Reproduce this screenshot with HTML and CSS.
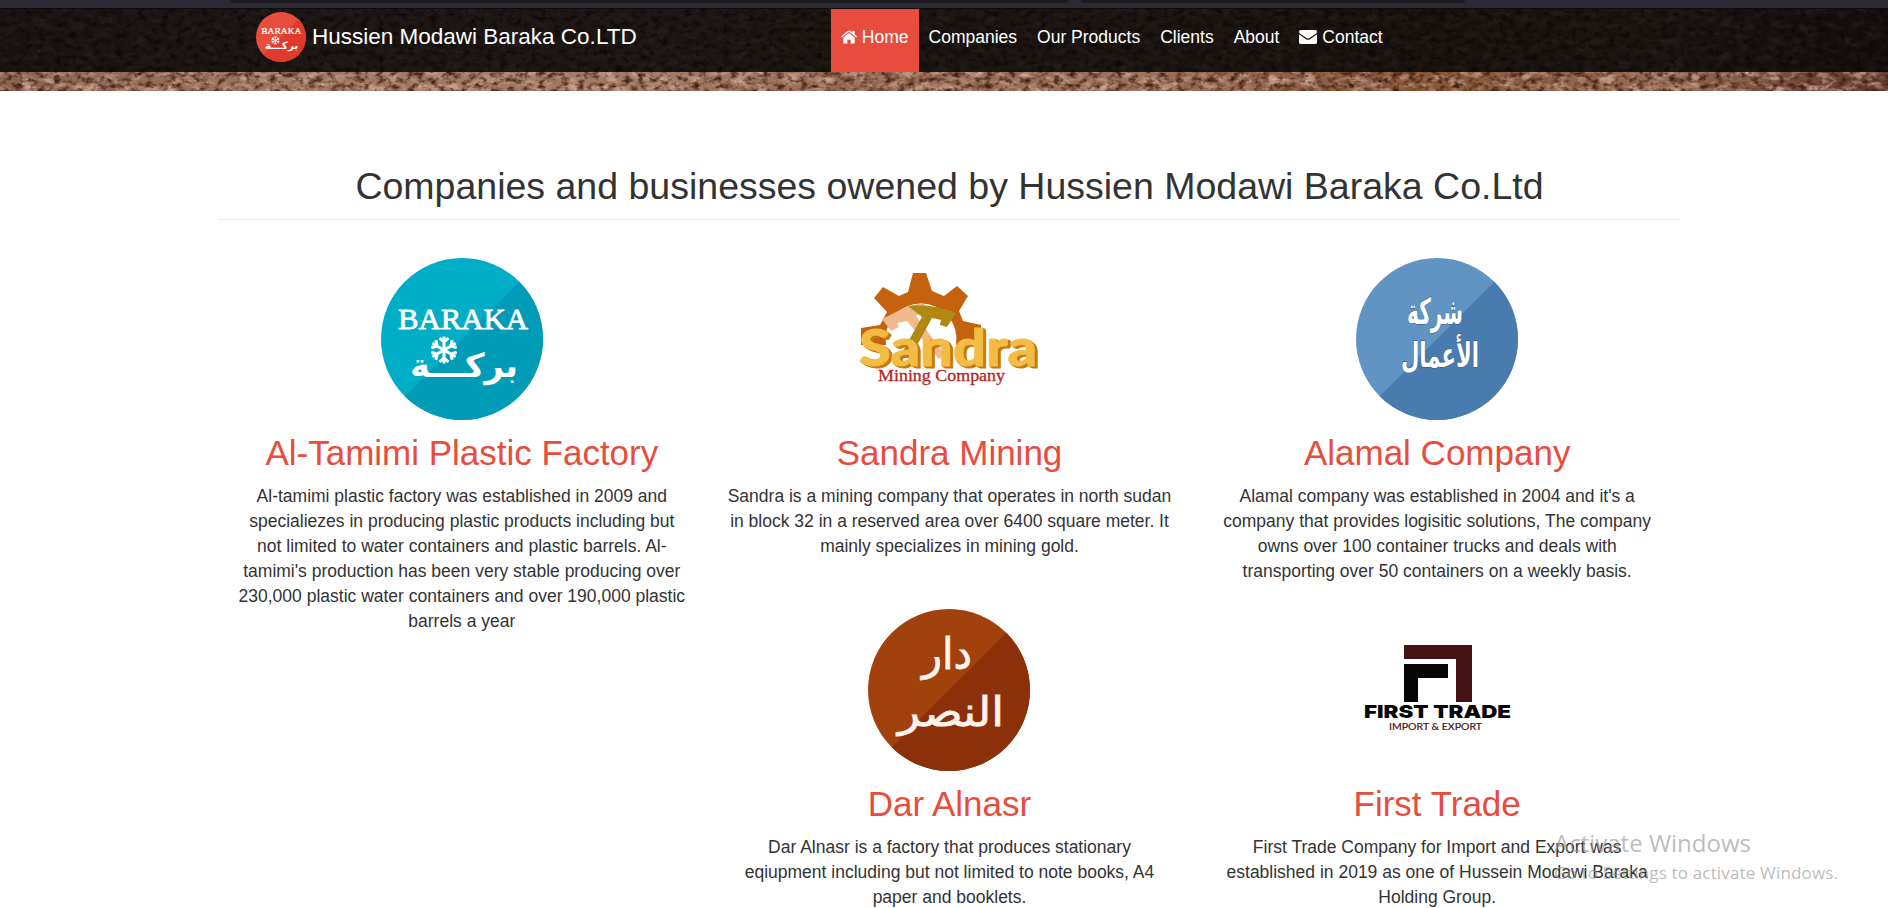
FILE: index.html
```html
<!DOCTYPE html>
<html lang="en">
<head>
<meta charset="utf-8">
<title>Hussien Modawi Baraka Co.LTD</title>
<link rel="stylesheet" href="styles.css">
</head>
<body>
<header class="hero">
  <svg class="rock" width="1888" height="91" aria-hidden="true">
    <defs>
      <linearGradient id="rockBase" x1="0" x2="1">
        <stop offset="0" stop-color="#8c6250"/><stop offset=".15" stop-color="#a07663"/>
        <stop offset=".35" stop-color="#a47b68"/><stop offset=".45" stop-color="#986a54"/>
        <stop offset=".6" stop-color="#9c705b"/><stop offset=".75" stop-color="#8a5536"/>
        <stop offset=".88" stop-color="#966a55"/><stop offset="1" stop-color="#63382d"/>
      </linearGradient>
      <filter id="grain" x="0" y="0" width="100%" height="100%" color-interpolation-filters="sRGB">
        <feTurbulence type="fractalNoise" baseFrequency=".13 .18" numOctaves="4" seed="8"/>
        <feColorMatrix values="0 0 0 0 .25  0 0 0 0 .12  0 0 0 0 .07  2.6 0 0 0 -1.15"/>
      </filter>
      <filter id="light" x="0" y="0" width="100%" height="100%" color-interpolation-filters="sRGB">
        <feTurbulence type="fractalNoise" baseFrequency=".06 .13" numOctaves="4" seed="21"/>
        <feColorMatrix values="0 0 0 0 .82  0 0 0 0 .68  0 0 0 0 .6  2.4 0 0 0 -1.05"/>
      </filter>
    </defs>
    <rect width="1888" height="91" fill="url(#rockBase)"/>
    <rect width="1888" height="91" filter="url(#light)"/>
    <rect width="1888" height="91" filter="url(#grain)"/>
  </svg>
  <div class="chrome"><i class="tab tab-left"></i><i class="tab tab-right"></i></div>
  <nav class="navbar">
    <a class="brand">
      <svg width="50" height="50" viewBox="0 0 162 162"><use href="#barakaRed"/></svg>
      <span class="brand-name">Hussien Modawi Baraka Co.LTD</span>
    </a>
    <ul class="menu">
      <li class="active"><svg width="16" height="14" viewBox="0 0 17 14"><path fill="#fff" d="M8.500 2.700 14.600 7.700V13.100Q14.600 14 13.700 14H10.200V9.800H6.800V14H3.300Q2.400 14 2.400 13.100V7.700ZM8.500 0Q9.100 0 9.600 .4L11.900 2.300V.5H14.500V4.400L17 6.500 16.100 7.600 8.500 1.500 .9 7.600 0 6.500 7.400 .4Q7.900 0 8.500 0Z"/></svg> Home</li>
      <li>Companies</li>
      <li>Our Products</li>
      <li>Clients</li>
      <li>About</li>
      <li><svg width="18" height="14" viewBox="0 0 18 14"><path fill="#fff" d="M0 1.500Q0 0 1.500 0H16.500Q18 0 18 1.500 18 2.800 16.800 3.700L10.500 8Q9 9 7.500 8L1.200 3.700Q0 2.800 0 1.500ZM0 4.300 7 9.200Q9 10.500 11 9.200L18 4.300V12.500Q18 14 16.500 14H1.500Q0 14 0 12.500Z"/></svg> Contact</li>
    </ul>
  </nav>
</header>

<main class="container">
  <h1>Companies and businesses owened by Hussien Modawi Baraka Co.Ltd</h1>
  <div class="grid">
    <article class="card tall">
      <svg class="logo" viewBox="0 0 162 162">
        <defs>
          <g id="barakaMark">
            <text x="17" y="71" class="latin" textLength="130" lengthAdjust="spacingAndGlyphs">BARAKA</text>
            <g stroke="#fff" stroke-width="3" fill="none" transform="translate(63 92)">
              <g id="arm"><path d="M0-13.500V13.500M-4.500-12 0-8 4.500-12M-4.500 12 0 8 4.500 12"/></g>
              <use href="#arm" transform="rotate(60)"/><use href="#arm" transform="rotate(120)"/>
            </g>
            <text x="83" y="119" class="arabic heavy" font-size="33" text-anchor="middle" textLength="108" lengthAdjust="spacingAndGlyphs">بركـــة</text>
          </g>
          <g id="barakaRed"><circle cx="81" cy="81" r="81" fill="#e84c3d"/><path d="M138.300 23.700A81 81 0 0 1 23.700 138.300Z" fill="#e03a2c"/><use href="#barakaMark"/></g>
        </defs>
        <circle cx="81" cy="81" r="81" fill="#00adc6"/><path d="M138.300 23.700A81 81 0 0 1 23.700 138.300Z" fill="#009cb7"/>
        <use href="#barakaMark"/>
      </svg>
      <h2>Al-Tamimi Plastic Factory</h2>
      <p>Al-tamimi plastic factory was established in 2009 and<br>specialiezes in producing plastic products including but<br>not limited to water containers and plastic barrels. Al-<br>tamimi's production has been very stable producing over<br>230,000 plastic water containers and over 190,000 plastic<br>barrels a year</p>
    </article>
    <article class="card">
      <svg class="logo wide" viewBox="0 0 220 162">
        <path fill="#c5620f" d="M22 87V70L41 67 48 54 35 40 44 29 60 38 69 34 74 15H87L93 33 105 38 118 28 129 38 120 53 124 63 142 67V87H117A35.500 35.500 0 1 0 47 87Z"/>
        <path fill="#f1b98e" d="M43 61 57 54Q70 46 84 45.500L90 50 77 58 106 97 100 101 68 63 58 65 60 69 52 73Z"/>
        <path fill="#b18911" d="M69 48Q93 45 117 55L108 69 101 67 102 62 93 60 71 100H60L83 59Z"/>
        <text x="20" y="108" class="sandra" textLength="178" lengthAdjust="spacingAndGlyphs">Sandra</text>
        <text x="39" y="123" class="mining" textLength="127" lengthAdjust="spacingAndGlyphs">Mining Company</text>
      </svg>
      <h2>Sandra Mining</h2>
      <p>Sandra is a mining company that operates in north sudan<br>in block 32 in a reserved area over 6400 square meter. It<br>mainly specializes in mining gold.</p>
    </article>
    <article class="card">
      <svg class="logo" viewBox="0 0 162 162">
        <circle cx="81" cy="81" r="81" fill="#6294c3"/><path d="M138.300 23.700A81 81 0 0 1 23.700 138.300Z" fill="#4a7baf"/>
        <g class="arabic outlined" text-anchor="middle">
          <text x="79" y="66" font-size="36" textLength="56" lengthAdjust="spacingAndGlyphs">شركة</text>
          <text x="84" y="109" font-size="34" textLength="78" lengthAdjust="spacingAndGlyphs">الأعمال</text>
        </g>
      </svg>
      <h2>Alamal Company</h2>
      <p>Alamal company was established in 2004 and it's a<br>company that provides logisitic solutions, The company<br>owns over 100 container trucks and deals with<br>transporting over 50 containers on a weekly basis.</p>
    </article>
    <article class="card">
      <svg class="logo" viewBox="0 0 162 162">
        <circle cx="81" cy="81" r="81" fill="#a0410e"/><path d="M138.300 23.700A81 81 0 0 1 23.700 138.300Z" fill="#8c3009"/>
        <g class="arabic cream" text-anchor="middle">
          <text x="79" y="60" font-size="44" textLength="50" lengthAdjust="spacingAndGlyphs">دار</text>
          <text x="83" y="117" font-size="41" textLength="106" lengthAdjust="spacingAndGlyphs">النصر</text>
        </g>
      </svg>
      <h2>Dar Alnasr</h2>
      <p>Dar Alnasr is a factory that produces stationary<br>eqiupment including but not limited to note books, A4<br>paper and booklets.</p>
    </article>
    <article class="card">
      <svg class="logo" viewBox="0 0 162 162">
        <path fill="#451316" d="M48 36H116V93H100V50H48Z"/>
        <path fill="#060606" d="M48 55H92V69H62V93H48Z"/>
        <text x="8" y="109" class="first" textLength="147" lengthAdjust="spacingAndGlyphs">FIRST TRADE</text>
        <text x="33" y="120.500" class="import" textLength="93" lengthAdjust="spacingAndGlyphs">IMPORT &amp; EXPORT</text>
      </svg>
      <h2>First Trade</h2>
      <p>First Trade Company for Import and Export was<br>established in 2019 as one of Hussein Modawi Baraka<br>Holding Group.</p>
    </article>
  </div>
</main>
<aside class="activate"><div class="activate-title">Activate Windows</div><div class="activate-sub">Go to Settings to activate Windows.</div></aside>
</body>
</html>
```
FILE: styles.css
```css
* { box-sizing: border-box; }
body {
  margin: 0;
  width: 1888px;
  height: 908px;
  overflow: hidden;
  background: #fff;
  color: #333;
  font: 17.5px/25px "Liberation Sans", Arial, sans-serif;
}
.hero { position: relative; height: 91px; }
.rock { position: absolute; inset: 0; }
.chrome {
  position: relative;
  height: 9px;
  background: #2b2a33;
  border-bottom: 1px solid #0c0c0d;
}
.tab { position: absolute; top: 0; height: 3px; background: #1c1b22; }
.tab-left { left: 230px; width: 839px; border-radius: 0 0 4px 4px; }
.tab-right { left: 1081px; width: 384px; border-radius: 0 0 4px 4px; }
.navbar {
  position: relative;
  display: flex;
  height: 63px;
  padding-left: 256px;
  background: rgba(6, 6, 6, .86);
  color: #fff;
}
.brand { display: flex; width: 575px; padding-top: 3px; gap: 6px; }
.brand-name { font-size: 22.5px; line-height: 50px; white-space: nowrap; }
.menu { display: flex; margin: 0; padding: 0; list-style: none; }
.menu li { padding: 15.5px 10px 0; line-height: 25px; white-space: nowrap; }
.menu svg { vertical-align: -1px; }
.menu .active { background: #e84c3d; }
.container { width: 1463px; height: 817px; margin-left: 218px; padding-top: 70px; overflow: hidden; }
h1 {
  height: 59px;
  margin: 0;
  border-bottom: 1px solid #eee;
  font-size: 37.5px;
  line-height: 50px;
  text-align: center;
  white-space: nowrap;
}
h1, h2 { font-weight: 400; }
.grid {
  display: grid;
  grid-template-columns: repeat(3, 1fr);
  grid-template-rows: 351px 299px;
  padding-top: 38px;
}
.card { display: flex; flex-direction: column; align-items: center; text-align: center; }
.tall { grid-row: span 2; }
.logo { flex: none; width: 162px; height: 162px; overflow: visible; }
.wide { width: 220px; }
h2 { margin: 11px 0 9px; color: #e84c3d; font-size: 35px; line-height: 44px; white-space: nowrap; }
p { margin: 0; white-space: nowrap; }
.latin { font: 30px "Liberation Serif", serif; fill: #fff; stroke: #fff; stroke-width: .8px; }
.arabic { font-family: "DejaVu Sans", sans-serif; fill: #fff; direction: rtl; }
.heavy { font-weight: bold; }
.outlined { font-weight: bold; stroke: #34567f; stroke-width: 1px; paint-order: stroke; }
.cream { fill: #fff3ec; stroke: #fff3ec; stroke-width: .8px; }
.sandra {
  font: 900 51px Lato, sans-serif;
  fill: #f3bd45;
  stroke: #f3bd45;
  stroke-width: .8px;
  stroke-linejoin: round;
  filter: drop-shadow(1.5px 1px 0 #c77a0c) drop-shadow(2px 1px 0 #c77a0c);
}
.mining { font: 17px "Liberation Serif", serif; fill: #b3261c; stroke: #b3261c; stroke-width: .3px; }
.first { font: 900 18px Inter, sans-serif; fill: #060606; }
.import { font: 10px Lato, sans-serif; fill: #451316; stroke: #451316; stroke-width: .2px; }
.activate {
  position: absolute;
  left: 1554px;
  top: 827px;
  color: rgba(150, 150, 150, .65);
  font-family: "Open Sans", "Noto Sans", sans-serif;
  white-space: nowrap;
}
.activate-title { font-size: 24px; line-height: 32px; }
.activate-sub { font-size: 17px; line-height: 27px; letter-spacing: .16px; }
```
